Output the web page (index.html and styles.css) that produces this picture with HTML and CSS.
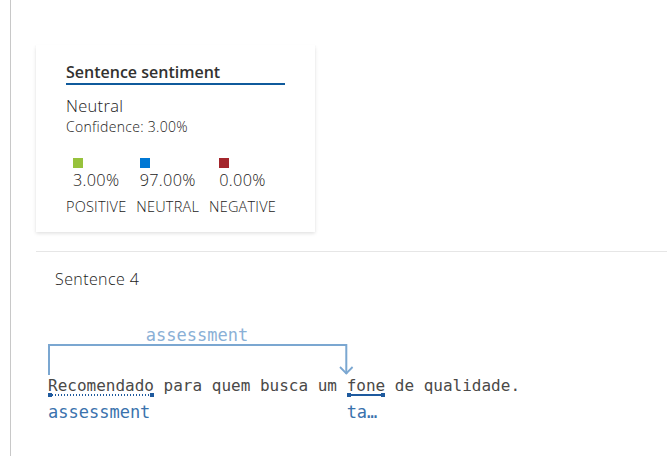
FILE: index.html
```html
<!DOCTYPE html>
<html>
<head>
<meta charset="utf-8">
<link rel="stylesheet" href="styles.css">
</head>
<body>
<div class="page">
  <div class="rail"></div>
  <div class="main">
    <div class="card">
      <div class="card-title">Sentence sentiment</div>
      <div class="label-main">Neutral</div>
      <div class="confidence">Confidence: 3.00%</div>
      <div class="scores">
        <div class="score">
          <div class="score-top">
            <span class="swatch pos"></span>
            <div class="pct">3.00%</div>
          </div>
          <div class="score-name">POSITIVE</div>
        </div>
        <div class="score">
          <div class="score-top">
            <span class="swatch neu"></span>
            <div class="pct">97.00%</div>
          </div>
          <div class="score-name">NEUTRAL</div>
        </div>
        <div class="score">
          <div class="score-top">
            <span class="swatch neg"></span>
            <div class="pct">0.00%</div>
          </div>
          <div class="score-name">NEGATIVE</div>
        </div>
      </div>
    </div>
    <div class="divider"></div>
    <div class="sentence-title">Sentence 4</div>
    <div class="annot">
      <div class="arc">
        <div class="arc-label">assessment</div>
        <svg class="arc-svg" width="308" height="31" viewBox="0 0 308 31">
          <path d="M1 31 V1 H298.3 V30" fill="none" stroke="#7ba7d1" stroke-width="2"/>
          <path d="M292 23 L298.3 29.5 L304.6 23" fill="none" stroke="#7ba7d1" stroke-width="1.8"/>
        </svg>
      </div>
      <div class="sentence"><span class="tok"><span class="word">Recomendado</span><span class="mark dotted"></span><span class="tag">assessment</span></span><span class="plain"> para quem busca um </span><span class="tok"><span class="word">fone</span><span class="mark solid"></span><span class="tag">ta…</span></span><span class="plain"> de qualidade.</span></div>
    </div>
  </div>
</div>
</body>
</html>
```

FILE: styles.css
```css
html, body {
  margin: 0;
  padding: 0;
  background: #ffffff;
}

body {
  font-family: "Open Sans", "Noto Sans", sans-serif;
  color: #201f1e;
}

.page {
  display: flex;
  min-height: 456px;
}

.rail {
  width: 1px;
  margin-left: 10px;
  background: #c8c8c8;
  flex: none;
}

.main {
  flex: 1;
  padding-left: 25px;
}

.card {
  margin-top: 45px;
  width: 279px;
  height: 187px;
  box-sizing: border-box;
  padding: 17px 30px 0 30px;
  background: #fff;
  box-shadow: 0 1.6px 3.6px rgba(0, 0, 0, 0.13), 0 0.3px 0.9px rgba(0, 0, 0, 0.11);
}

.card-title {
  font-size: 16px;
  font-weight: 600;
  line-height: 21px;
  border-bottom: 2px solid #0f5a9c;
  color: #323130;
}

.label-main {
  margin-top: 10px;
  font-size: 16.5px;
  font-weight: 300;
  line-height: 22px;
  letter-spacing: 0.3px;
  color: #1b1a19;
}

.confidence {
  font-size: 14px;
  font-weight: 300;
  line-height: 19px;
  letter-spacing: 0.3px;
  color: #1b1a19;
}

.scores {
  display: flex;
  gap: 10px;
  margin-top: 22px;
}

.score {
  display: flex;
  flex-direction: column;
  align-items: center;
}

.score-top {
  display: flex;
  flex-direction: column;
  align-items: flex-start;
}

.swatch {
  display: block;
  width: 10px;
  height: 10px;
}

.swatch.pos { background: #97c23c; }
.swatch.neu { background: #0078d4; }
.swatch.neg { background: #a4262c; }

.pct {
  margin-top: 1px;
  font-size: 16.3px;
  font-weight: 300;
  line-height: 22px;
  letter-spacing: 0.3px;
  color: #1b1a19;
}

.score-name {
  margin-top: 6px;
  font-size: 14.5px;
  font-weight: 300;
  line-height: 19px;
  letter-spacing: 0.2px;
  color: #1b1a19;
}

.divider {
  margin-top: 19px;
  height: 1px;
  background: #e6e6e6;
}

.sentence-title {
  margin-top: 17px;
  padding-left: 19px;
  font-size: 16px;
  font-weight: 300;
  line-height: 21px;
  letter-spacing: 0.4px;
  color: #1b1a19;
}

.annot {
  margin-top: 37px;
  padding-left: 12px;
}

.arc {
  width: 308px;
}

.arc-label {
  width: 298px;
  text-align: center;
  font-family: "DejaVu Sans Mono", "Liberation Mono", monospace;
  font-size: 17px;
  line-height: 17px;
  color: #8ab0d6;
}

.arc-svg {
  display: block;
}

.sentence {
  margin-top: 3px;
  font-family: "DejaVu Sans Mono", "Liberation Mono", monospace;
  font-size: 16px;
  line-height: 15px;
  color: #4a4948;
  white-space: pre;
}

.tok {
  display: inline-flex;
  flex-direction: column;
  vertical-align: top;
}

.plain {
  vertical-align: top;
}

.word {
  display: block;
}

.mark {
  display: block;
  position: relative;
  height: 4px;
}

.mark::before,
.mark::after {
  content: "";
  position: absolute;
  top: 0;
  width: 4px;
  height: 4px;
  background: #1e5a9e;
}

.mark::before { left: 0; }
.mark::after { right: 0; }

.mark.dotted {
  background-image: radial-gradient(circle, #1e5a9e 0.8px, transparent 1px);
  background-size: 3px 2px;
  background-position: 0 1px;
  background-repeat: repeat-x;
}

.mark.solid {
  background: linear-gradient(#1e5a9e, #1e5a9e) 0 1px / 100% 2px no-repeat;
}

.tag {
  display: block;
  margin-top: 6px;
  font-size: 17px;
  line-height: 18px;
  color: #3a72ad;
}
```
